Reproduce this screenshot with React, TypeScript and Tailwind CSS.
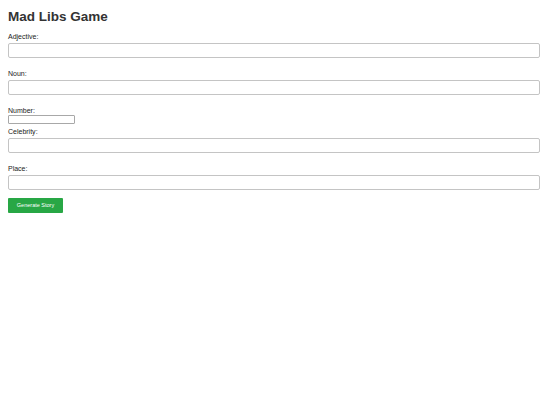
const fields = [
  { label: 'Adjective', id: 'adjective' },
  { label: 'Noun', id: 'noun' },
];

const lowerFields = [
  { label: 'Celebrity', id: 'celebrity' },
  { label: 'Place', id: 'place' },
];

function TextField({ label, id }: { label: string; id: string }) {
  return (
    <div className="flex flex-col mb-[12px]">
      <label htmlFor={id} className="text-[7px] leading-[8px] text-[#222] mb-[2px]">
        {label}:
      </label>
      <input
        id={id}
        type="text"
        className="w-[532px] h-[15px] border border-[#c4c4c4] rounded-[2px] bg-white outline-none"
      />
    </div>
  );
}

export default function App() {
  return (
    <div
      className="min-h-[405px] bg-white pl-[8px] pt-[9px]"
      style={{ fontFamily: '"Liberation Sans", Arial, sans-serif' }}
    >
      <h1 className="text-[13.5px] leading-[16px] font-bold text-[#333] mb-[8px]">Mad Libs Game</h1>
      {fields.map(f => (
        <TextField key={f.id} {...f} />
      ))}
      <div className="flex flex-col mb-[4px]">
        <label htmlFor="number" className="text-[7px] leading-[8px] text-[#222]">
          Number:
        </label>
        <input
          id="number"
          type="text"
          className="w-[67px] h-[9px] border border-[#a8a8a8] rounded-[1px] bg-white outline-none"
        />
      </div>
      {lowerFields.map(f => (
        <TextField key={f.id} {...f} />
      ))}
      <button className="block mt-[-4px] w-[55px] h-[15px] bg-[#28a745] text-white text-[5.5px] leading-[15px] rounded-[1px]">
        Generate Story
      </button>
    </div>
  );
}
